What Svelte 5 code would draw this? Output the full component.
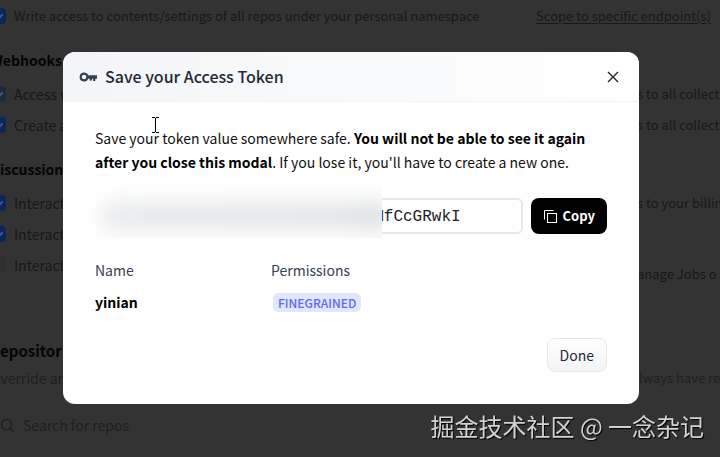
<script lang="ts">
	interface Scope {
		label: string;
		checked: boolean;
		muted?: boolean;
	}

	interface ScopeGroup {
		title: string;
		scopes: Scope[];
	}

	const groups: ScopeGroup[] = [
		{
			title: 'Webhooks',
			scopes: [
				{ label: 'Access w', checked: true, muted: true },
				{ label: 'Create a', checked: true }
			]
		},
		{
			title: 'Discussion',
			scopes: [
				{ label: 'Interact', checked: true },
				{ label: 'Interact', checked: true },
				{ label: 'Interact', checked: false }
			]
		}
	];

	const token = {
		name: 'yinian',
		permissions: 'FINEGRAINED',
		value: 'MfCcGRwkI'
	};

	let open = $state(true);

	function close() {
		open = false;
	}

	function copyToken() {
		navigator.clipboard?.writeText(token.value);
	}
</script>

<div class="page">
	<div class="top-row">
		<label class="scope">
			<input type="checkbox" checked />
			<span>Write access to contents/settings of all repos under your personal namespace</span>
		</label>
		<a class="endpoint-link" href="#endpoints">Scope to specific endpoint(s)</a>
	</div>

	<div class="columns">
		<div class="column">
			{#each groups as group}
				<section class="group">
					<h2>{group.title}</h2>
					{#each group.scopes as scope}
						<label class="scope">
							<input type="checkbox" checked={scope.checked} class:muted={scope.muted} />
							<span>{scope.label}</span>
						</label>
					{/each}
				</section>
			{/each}
		</div>
		<div class="column column-right">
			<p>s to all collect</p>
			<p>s to all collect</p>
			<p class="billing">s to your billin</p>
			<p class="jobs">anage Jobs o</p>
		</div>
	</div>

	<section class="repositories">
		<h2>Repositor</h2>
		<div class="description">
			<span>Override an</span>
			<span class="description-end">lways have re</span>
		</div>
		<div class="search">
			<svg viewBox="0 0 16 16" fill="none" stroke="currentColor" stroke-width="1.2">
				<circle cx="7" cy="7" r="5.5" />
				<path d="M11 11 15 15" />
			</svg>
			<input type="text" placeholder="Search for repos" aria-label="Search for repos" />
		</div>
	</section>
</div>

{#if open}
	<div class="backdrop">
		<div class="modal" role="dialog" aria-modal="true" aria-labelledby="modal-title">
			<header>
				<svg class="key-icon" viewBox="0 0 32 32" fill="currentColor">
					<path
						fill-rule="evenodd"
						d="M9 8a8 8 0 1 0 7.5 11H19v3h4v-3h2v4h4v-4h3v-6H16.500A8 8 0 0 0 9 8Zm0 4a4 4 0 1 1 0 8 4 4 0 0 1 0-8Z"
					/>
				</svg>
				<h1 id="modal-title">Save your Access Token</h1>
				<button class="close" aria-label="Close" onclick={close}>
					<svg viewBox="0 0 12 12" fill="none" stroke="currentColor" stroke-width="1.4">
						<path d="M1 1 11 11M11 1 1 11" />
					</svg>
				</button>
			</header>

			<div class="body">
				<p class="message">
					Save your token value somewhere safe. <strong
						>You will not be able to see it again after you close this modal</strong
					>. If you lose it, you'll have to create a new one.
				</p>

				<div class="token-row">
					<div class="token-field">
						<input type="text" readonly value={token.value} aria-label="Access token" />
						<div class="redaction"><div class="smudge"></div></div>
					</div>
					<button class="copy" onclick={copyToken}>
						<svg viewBox="0 0 13 13" fill="none" stroke="currentColor">
							<path d="M.5 9.500V.5H9.500" />
							<rect x="3.500" y="3.500" width="9" height="9" />
						</svg>
						Copy
					</button>
				</div>

				<dl>
					<div>
						<dt>Name</dt>
						<dd>{token.name}</dd>
					</div>
					<div>
						<dt>Permissions</dt>
						<dd><span class="badge">{token.permissions}</span></dd>
					</div>
				</dl>

				<footer>
					<button class="done" onclick={close}>Done</button>
				</footer>
			</div>

			<svg class="cursor" viewBox="0 0 7 16" fill="none" stroke="#000">
				<path d="M0 .5H3M4 .5H7M3.500 1V15M0 15.500H3M4 15.500H7" />
			</svg>
		</div>
	</div>
{/if}

<div class="watermark">掘金技术社区 @ 一念杂记</div>

<style>
	:global(body) {
		background: #333;
		overflow: hidden;
	}

	:global(#app) {
		font-family: 'Noto Sans CJK SC', 'Open Sans', sans-serif;
		font-size: 14px;
		line-height: 24px;
	}

	h1,
	h2,
	p,
	dl,
	dd {
		margin: 0;
	}

	button,
	input {
		font: inherit;
	}

	svg {
		display: block;
		flex: none;
	}

	.page {
		margin-left: -10px;
		padding-top: 4px;
		color: #161719;
		white-space: nowrap;
	}

	.page h2 {
		font-size: 15px;
		line-height: 24px;
		color: #040404;
	}

	.top-row {
		display: flex;
		justify-content: space-between;
		padding-right: 9px;
		font-size: 13px;
	}

	.endpoint-link {
		color: #161719;
		text-underline-offset: 2px;
	}

	.scope {
		display: flex;
		align-items: center;
		gap: 8px;
	}

	.scope input {
		appearance: none;
		flex: none;
		display: grid;
		place-items: center;
		width: 16px;
		height: 16px;
		margin: 0;
		border-radius: 4px;
		background: #303030;
	}

	.scope input:checked {
		background: #0b265e;
	}

	.scope input.muted {
		background: #1f2a42;
	}

	.scope input:checked::after {
		content: '';
		width: 7px;
		height: 3px;
		border: solid #4a5a7c;
		border-width: 0 0 2px 2px;
		transform: rotate(-45deg);
	}

	.columns {
		display: grid;
		grid-template-columns: 1fr 83px;
		padding-top: 20px;
	}

	.group {
		display: grid;
		gap: 7px;
		padding-bottom: 20px;
	}

	.page .group h2 {
		margin-bottom: 3px;
		font-size: 14px;
	}

	.column-right {
		display: grid;
		gap: 7px;
		align-content: start;
		padding-top: 34px;
		font-size: 13px;
		overflow: hidden;
	}

	.billing {
		margin-top: 47px;
	}

	.jobs {
		margin-top: 40px;
	}

	.repositories {
		display: grid;
		gap: 3px;
		padding-top: 42px;
	}

	.description {
		display: flex;
		justify-content: space-between;
		color: #1e1f21;
	}

	.description-end {
		width: 81px;
		font-size: 13px;
	}

	.search {
		display: flex;
		align-items: center;
		gap: 8px;
		margin-top: 20px;
		padding-left: 10px;
		color: #1a1b1d;
	}

	.search svg {
		width: 15px;
		height: 15px;
	}

	.search input {
		border: 0;
		padding: 0;
		background: none;
		outline: none;
	}

	.search input::placeholder {
		color: #1e1f21;
	}

	.backdrop {
		position: fixed;
		inset: 0;
		display: flex;
		align-items: center;
		justify-content: center;
		padding: 0 18px 1px 0;
	}

	.modal {
		position: relative;
		width: 100%;
		max-width: 576px;
		border-radius: 12px;
		background: #fff;
		color: #111;
		overflow: hidden;
	}

	header {
		display: flex;
		align-items: center;
		gap: 8px;
		padding: 12px 16px;
		border-bottom: 1px solid #f3f4f6;
		background: linear-gradient(to right, #f3f5f8, #fff);
		color: #1f2937;
	}

	h1 {
		flex: 1;
		font-size: 16px;
		line-height: 25px;
		font-weight: 500;
	}

	.key-icon {
		width: 18px;
		height: 18px;
		color: #374151;
	}

	.close {
		padding: 4px;
		border: 0;
		background: none;
		color: #222;
	}

	.close svg {
		width: 12px;
		height: 12px;
	}

	.body {
		padding: 24px 32px 32px;
	}

	strong {
		font-weight: 600;
		color: #000;
	}

	.token-row {
		display: flex;
		gap: 8px;
		margin-top: 24px;
	}

	.token-field {
		position: relative;
		flex: 1;
	}

	.token-field input {
		box-sizing: border-box;
		width: 100%;
		height: 36px;
		padding: 2px 60px 0 0;
		border: 2px solid #e5e7eb;
		border-radius: 6px;
		outline: none;
		font-family: 'Liberation Mono', monospace;
		font-size: 16px;
		text-align: right;
		color: #222;
	}

	.redaction {
		position: absolute;
		inset: -16px 141px -4px -16px;
		overflow: hidden;
		background: #fff;
	}

	.smudge {
		height: 28px;
		margin: 20px -8px 0 24px;
		background: linear-gradient(to right, #e8e9eb, #e4e6e8 80%, #dcdee1);
		filter: blur(10px);
	}

	.copy {
		display: flex;
		align-items: center;
		gap: 6px;
		height: 36px;
		padding: 0 12px 0 13px;
		border: 0;
		border-radius: 8px;
		background: #000;
		color: #fff;
		font-size: 13px;
		font-weight: 600;
	}

	.copy svg {
		width: 13px;
		height: 13px;
	}

	dl {
		display: grid;
		grid-template-columns: 176px 1fr;
		margin-top: 24px;
	}

	dt {
		color: #374151;
	}

	dd {
		margin-top: 8px;
		font-weight: 600;
		color: #000;
	}

	.badge {
		display: inline-block;
		margin-left: 2px;
		padding: 0 5px;
		border-radius: 5px;
		background: #e0e7ff;
		color: #6366f1;
		font-size: 12px;
		line-height: 19px;
		font-weight: 500;
	}

	footer {
		display: flex;
		justify-content: flex-end;
		margin-top: 24px;
	}

	.done {
		height: 34px;
		padding: 0 12px;
		border: 1px solid #e5e7eb;
		border-radius: 8px;
		background: linear-gradient(to bottom, #fff, #f3f4f6);
		color: #1f2937;
	}

	.cursor {
		position: absolute;
		left: 89px;
		top: 65px;
		width: 7px;
		height: 16px;
	}

	.watermark {
		position: fixed;
		right: 16px;
		bottom: 14px;
		color: #d2d2d2;
		font-size: 24px;
		line-height: 34px;
		text-shadow: 1px 1px 1px #000;
	}
</style>
